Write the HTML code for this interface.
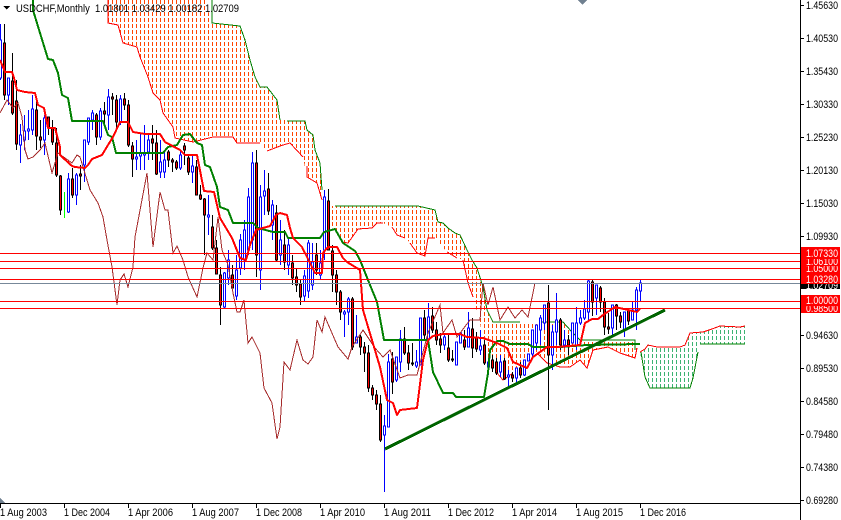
<!DOCTYPE html>
<html><head><meta charset="utf-8"><title>USDCHF Monthly</title>
<style>html,body{margin:0;padding:0;background:#fff;width:841px;height:520px;overflow:hidden}
svg{display:block}text{font-family:"Liberation Sans",sans-serif;font-size:11px;fill:#000}
.w text{fill:#fff}</style></head><body>
<svg width="841" height="520" viewBox="0 0 841 520" xmlns="http://www.w3.org/2000/svg" shape-rendering="crispEdges">
<defs>
<pattern id="o" width="4" height="6" patternUnits="userSpaceOnUse"><rect x="0" y="0" width="1" height="4" fill="#ff4500"/></pattern>
<pattern id="g" width="4" height="6" patternUnits="userSpaceOnUse"><rect x="0" y="0" width="1" height="4" fill="#3cb371"/></pattern>
</defs>
<!-- clouds -->
<path fill="url(#o)" d="M107 0H205L212 23L240 26L245 40L250 60L255 77L260 87L267 87L277 100L280 120L305 121L307 130L313 135L315 150L320 163L322 190L322 200L317 183L307 177L303 157L290 143L283 145L267 151L260 143L237 143L233 137L213 137L193 142L175 138L173 127L163 113L160 100L153 93L148 77L140 57L137 47L123 43L118 25L108 23Z"/>
<path fill="url(#o)" d="M325 206L418 206L435 210L438 222L443 223L448 228L455 233L460 235L467 250L472 260L477 268L483 287L487 310L493 322L563 322L572 332L580 340L635 340L637 350L635 358L620 353L608 347L593 350L587 368L580 360L570 367L547 363L537 353L513 373L503 380L497 373L488 363L480 323L473 297L468 283L463 260L457 258L447 252L435 238L428 238L425 256L417 253L410 243L405 238L397 235L392 227L383 223L377 223L372 228L358 229L348 243L342 242L335 230L322 213Z"/>
<path fill="url(#g)" d="M640 352L645 349L648 345L657 347L680 347L685 345L690 333L703 332L712 329L720 326L740 327L745 326V344H700L698 352L693 378L690 388H650L645 377Z"/>
<g fill="none" stroke-width="1">
<path stroke="#ff0000" d="M108 0V23L118 25L123 43L137 47L140 57L148 77L153 93L160 100L163 113L173 127L175 138L193 142L213 137L233 137L237 143L260 143M267 151L283 145L290 143L303 157M307 166V177L317 183L322 200M335 230L342 242L348 243L358 229L372 228L377 223L383 223M392 227L397 235L405 238M410 243L417 253L425 256L428 238L435 238M447 252L457 258M463 260L468 283L473 297M497 373L503 380L513 373M537 353L547 363L560 367L570 367L580 360L587 368L593 350L608 347L620 353L635 358L637 348"/>
<path stroke="#008000" d="M212 0V23L240 26L245 40L250 60L255 77L260 87L267 87L277 100L280 120M287 121H305L307 130L313 135L315 150L320 163L322 190M335 206H418L435 210L438 222L443 223L448 228L455 233L460 235L467 250L472 260L477 268L483 287L487 310L493 322H520M540 322H563L572 332L580 340H635V350"/>
<path stroke="#ff0000" d="M640 352L645 349L648 345L657 347H680L685 345L690 333L703 332L712 329L720 326L740 327L745 326"/>
<path stroke="#008000" d="M745 344H700M698 352L693 378L690 388H650L645 377L641 352"/>
</g>
<!-- candles wicks -->
<path fill="none" stroke="#0000ff" d="M0.5 24V80M8.5 78V105M20.5 124V163M24.5 115V150M28.5 110V140M32.5 95V135M44.5 115V155M68.5 173V213M76.5 173V205M84.5 140V182M88.5 118V145M92.5 110V130M100.5 108V140M108.5 89V130M120.5 95V125M136.5 140V170M140.5 133V170M144.5 125V170M148.5 133V160M160.5 140V178M164.5 152V178M180.5 150V170M192.5 155V183M208.5 195V235M224.5 272V308M228.5 250V285M236.5 255V300M240.5 234V275M244.5 220V270M248.5 188V255M252.5 152V250M260.5 185V290M264.5 170V215M272.5 200V240M280.5 220V265M288.5 238V275M304.5 270V302M308.5 240V298M312.5 243V290M320.5 250V280M324.5 190V260M344.5 310V337M348.5 297V325M356.5 315V343M384.5 415V492M388.5 354V427M396.5 357V382M400.5 330V372M416.5 350V368M420.5 318V365M428.5 303V340M444.5 335V350M456.5 342V365M460.5 333V343M468.5 312V347M480.5 330V355M488.5 358V375M500.5 355V377M508.5 370V386M516.5 368V384M524.5 360V376M528.5 354V361M532.5 330V358M536.5 325V350M540.5 315V345M544.5 305V330M552.5 325V370M556.5 293V345M564.5 330V348M572.5 323V343M576.5 307V350M580.5 310V325M584.5 300V320M588.5 279V320M596.5 285V315M612.5 305V337M624.5 312V337M632.5 302V320M636.5 287V330M640.5 280V302"/>
<path fill="none" stroke="#000" d="M4.5 24V100M12.5 53V115M16.5 80V150M36.5 100V150M40.5 120V148M48.5 117V135M52.5 120V145M56.5 128V177M60.5 175V215M72.5 168V198M80.5 165V190M96.5 113V145M104.5 102V125M112.5 93V115M116.5 95V130M124.5 93V110M128.5 100V147M132.5 142V177M152.5 125V160M156.5 130V175M168.5 150V167M172.5 158V172M176.5 160V170M184.5 143V165M188.5 155V175M196.5 160V195M200.5 185V200M204.5 198V255M212.5 215V250M216.5 240V274M220.5 267V325M232.5 265V288M256.5 150V277M268.5 173V215M276.5 205V262M284.5 230V270M292.5 255V285M296.5 268V292M300.5 280V305M316.5 243V275M328.5 189V250M332.5 245V292M336.5 270V305M340.5 290V320M352.5 297V350M360.5 335V355M364.5 342V372M368.5 345V392M372.5 385V400M376.5 390V410M380.5 395V442M392.5 352V394M404.5 327V355M408.5 345V370M412.5 343V366M424.5 310V340M432.5 307V333M436.5 322V345M440.5 333V353M448.5 335V362M452.5 350V362M464.5 330V350M472.5 318V358M476.5 332V352M484.5 340V365M492.5 355V372M496.5 358V375M504.5 358V380M512.5 372V382M520.5 362V378M548.5 285V410M560.5 318V350M568.5 335V355M592.5 280V316M600.5 286V312M604.5 298V335M608.5 313V334M616.5 304V330M620.5 312V328M628.5 308V325"/>
<path fill="none" stroke="#00ff00" d="M64.5 192V218"/>
<!-- blue bodies -->
<path fill="#fff" stroke="#0000ff" d="M-0.5 40h2v38h-2zM7.5 78h2v17h-2zM19.5 135h2v10h-2zM23.5 131h2v9h-2zM27.5 129h2v2h-2zM31.5 109h2v21h-2zM43.5 118h2v22h-2zM67.5 179h2v33h-2zM75.5 175h2v20h-2zM83.5 140h2v25h-2zM87.5 118h2v24h-2zM91.5 113h2v7h-2zM99.5 111h2v26h-2zM107.5 97h2v18h-2zM119.5 99h2v23h-2zM135.5 157h2v2h-2zM139.5 153h2v3h-2zM143.5 153h2v2h-2zM147.5 140h2v12h-2zM159.5 162h2v10h-2zM163.5 160h2v12h-2zM179.5 155h2v13h-2zM191.5 166h2v6h-2zM207.5 215h2v2h-2zM223.5 273h2v34h-2zM227.5 260h2v18h-2zM235.5 270h2v26h-2zM239.5 240h2v28h-2zM243.5 230h2v30h-2zM247.5 197h2v53h-2zM251.5 163h2v77h-2zM259.5 197h2v73h-2zM263.5 191h2v5h-2zM271.5 205h2v20h-2zM279.5 240h2v15h-2zM287.5 245h2v20h-2zM303.5 276h2v20h-2zM307.5 243h2v48h-2zM311.5 262h2v23h-2zM319.5 263h2v12h-2zM323.5 197h2v53h-2zM343.5 312h2v2h-2zM347.5 299h2v13h-2zM355.5 337h2v6h-2zM383.5 426h2v9h-2zM387.5 362h2v65h-2zM395.5 357h2v23h-2zM399.5 339h2v23h-2zM415.5 362h2v4h-2zM419.5 318h2v47h-2zM427.5 317h2v23h-2zM443.5 337h2v8h-2zM455.5 342h2v23h-2zM459.5 333h2v10h-2zM467.5 328h2v19h-2zM479.5 346h2v4h-2zM487.5 362h2v5h-2zM499.5 362h2v10h-2zM507.5 375h2v2h-2zM515.5 368h2v10h-2zM523.5 360h2v15h-2zM527.5 354h2v7h-2zM531.5 330h2v24h-2zM535.5 325h2v18h-2zM539.5 318h2v12h-2zM543.5 305h2v18h-2zM551.5 332h2v23h-2zM555.5 320h2v12h-2zM563.5 340h2v5h-2zM571.5 323h2v20h-2zM575.5 323h2v22h-2zM579.5 318h2v5h-2zM583.5 309h2v9h-2zM587.5 281h2v31h-2zM595.5 285h2v13h-2zM611.5 305h2v23h-2zM623.5 312h2v18h-2zM631.5 310h2v10h-2zM635.5 290h2v20h-2zM639.5 283h2v8h-2z"/>
<!-- red bodies -->
<path fill="#ff0000" stroke="#000" d="M3.5 43h2v52h-2zM11.5 81h2v32h-2zM15.5 101h2v43h-2zM35.5 110h2v26h-2zM39.5 137h2v3h-2zM47.5 117h2v11h-2zM51.5 128h2v14h-2zM55.5 143h2v32h-2zM59.5 176h2v34h-2zM71.5 179h2v16h-2zM79.5 174h2v2h-2zM95.5 115h2v22h-2zM103.5 111h2v3h-2zM111.5 97h2v2h-2zM115.5 100h2v22h-2zM123.5 99h2v6h-2zM127.5 105h2v40h-2zM131.5 146h2v13h-2zM151.5 139h2v4h-2zM155.5 143h2v31h-2zM167.5 152h2v8h-2zM171.5 160h2v2h-2zM175.5 162h2v6h-2zM183.5 146h2v4h-2zM187.5 158h2v14h-2zM195.5 167h2v28h-2zM199.5 195h2v4h-2zM203.5 199h2v16h-2zM211.5 227h2v21h-2zM215.5 248h2v26h-2zM219.5 275h2v30h-2zM231.5 275h2v13h-2zM255.5 163h2v92h-2zM267.5 189h2v22h-2zM275.5 213h2v47h-2zM283.5 245h2v17h-2zM291.5 263h2v15h-2zM295.5 277h2v8h-2zM299.5 284h2v13h-2zM315.5 255h2v15h-2zM327.5 201h2v49h-2zM331.5 251h2v24h-2zM335.5 275h2v17h-2zM339.5 292h2v20h-2zM351.5 299h2v48h-2zM359.5 337h2v10h-2zM363.5 347h2v6h-2zM367.5 353h2v35h-2zM371.5 388h2v7h-2zM375.5 395h2v9h-2zM379.5 404h2v36h-2zM391.5 359h2v23h-2zM403.5 339h2v14h-2zM407.5 353h2v10h-2zM411.5 363h2v1h-2zM423.5 318h2v17h-2zM431.5 316h2v14h-2zM435.5 330h2v10h-2zM439.5 339h2v6h-2zM447.5 348h2v12h-2zM451.5 359h2v1h-2zM463.5 340h2v7h-2zM471.5 329h2v19h-2zM475.5 337h2v12h-2zM483.5 345h2v18h-2zM491.5 360h2v8h-2zM495.5 362h2v11h-2zM503.5 361h2v18h-2zM511.5 375h2v3h-2zM519.5 368h2v7h-2zM547.5 303h2v52h-2zM559.5 320h2v25h-2zM567.5 340h2v5h-2zM591.5 282h2v20h-2zM599.5 288h2v14h-2zM603.5 302h2v25h-2zM607.5 327h2v2h-2zM615.5 305h2v11h-2zM619.5 316h2v6h-2zM627.5 310h2v11h-2z"/>
<!-- chikou -->
<path fill="none" stroke="#a52a2a" stroke-width="1" d="M0 113L7 100L13 108L18 103L22 117L25 150L28 159L33 157L40 150L45 143L52 173L58 153L72 163L77 155L80 157L90 190L98 203L103 217L107 240L112 267L117 305L120 280L124 274L128 287L133 267L135 237L147 173L153 247L160 192L165 210L168 210L173 253L177 246L183 260L188 277L197 297L203 268L207 253L213 260L218 217L222 250L228 265L233 293L237 312L240 312L244 300L248 343L252 337L260 353L264 388L272 403L277 439L280 427L284 362L290 370L297 340L303 360L308 364L313 357L317 320L322 332L325 317L338 347L348 359L352 347L363 330L375 348L383 357L390 350L400 378L408 375L417 375L428 333L440 305L443 333L452 320L457 337L470 320L480 320L483 283L488 305L493 287L500 320L508 307L515 318L522 310L528 317L535 283"/>
<!-- kijun green -->
<path fill="none" stroke="#008000" stroke-width="2" stroke-linejoin="round" d="M33 0V10L40 33L48 59L53 60L58 73L62 95L68 98L72 121H103L108 135L112 137L116 153H163L168 147L177 145L183 135L190 134L197 143L202 145L205 165L210 167L217 187L220 207L228 210L233 223H253L258 228L273 232H285L288 238H320L324 232L335 229L343 243L355 251L360 260L370 285L377 302L384 340H428L433 372L443 393H453L456 397H484L488 373L490 350L497 341H503L510 344H528L533 347H560L587 345L640 344"/>
<!-- tenkan red -->
<path fill="none" stroke="#ff0000" stroke-width="2" stroke-linejoin="round" d="M0 60L5 72H12L14 78L17 90L25 92L35 93L38 105L44 108L48 128H55L60 147V155L72 166L75 167L85 168L88 165L92 159L102 155L108 145L113 137L120 122H128L133 132L145 134H160L165 142L180 150L185 155H197L204 191L214 192L220 218L232 238L240 258L246 260L250 245L256 230L270 226L276 215L280 213L287 215L290 228L293 238L302 247L310 263L315 273H322L323 253L328 247H337L343 258L347 262L360 270L363 310L380 367L387 400L393 403L397 415L400 410L417 408L423 360L428 340L433 336L443 334H460L467 337L483 338L497 343L507 348L513 362L527 368L533 357L547 347H557L580 345L585 323L592 319H598L603 315L615 307L637 312L640 309"/>
<!-- trendline -->
<path fill="none" stroke="#006400" stroke-width="3" d="M385 449L665 310"/>
<!-- horizontal lines -->
<path fill="none" stroke="#ff0000" d="M0 253.5H800M0 261.5H800M0 268.5H800M0 279.5H800M0 301.5H800M0 308.5H800"/>
<path fill="none" stroke="#778899" d="M0 283.5H800"/>
<!-- marker triangles -->
<path fill="#708090" d="M578 0H587L582.500 5ZM0 498L5 503H0Z"/>
<!-- title -->
<path fill="#000" d="M3 6H10L6.500 9.500Z"/>
<text x="16" y="12" textLength="223" lengthAdjust="spacingAndGlyphs" xml:space="preserve">USDCHF,Monthly  1.01801 1.03429 1.00182 1.02709</text>
<!-- axes -->
<rect x="800" y="0" width="1" height="520" fill="#000"/>
<rect x="0" y="503" width="801" height="1" fill="#000"/>
<path fill="none" stroke="#000" d="M800 5.500H804M800 38.500H804M800 71.500H804M800 104.500H804M800 137.500H804M800 170.500H804M800 203.500H804M800 236.500H804M800 335.500H804M800 368.500H804M800 401.500H804M800 434.500H804M800 467.500H804M800 500.500H804M0.500 503V508M64.500 503V508M128.500 503V508M192.500 503V508M256.500 503V508M320.500 503V508M384.500 503V508M448.500 503V508M512.500 503V508M576.500 503V508M640.500 503V508"/>
<g>
<text x="806" y="9" textLength="32" lengthAdjust="spacingAndGlyphs">1.45630</text>
<text x="806" y="42" textLength="32" lengthAdjust="spacingAndGlyphs">1.40530</text>
<text x="806" y="75" textLength="32" lengthAdjust="spacingAndGlyphs">1.35430</text>
<text x="806" y="108" textLength="32" lengthAdjust="spacingAndGlyphs">1.30330</text>
<text x="806" y="141" textLength="32" lengthAdjust="spacingAndGlyphs">1.25230</text>
<text x="806" y="174" textLength="32" lengthAdjust="spacingAndGlyphs">1.20130</text>
<text x="806" y="207" textLength="32" lengthAdjust="spacingAndGlyphs">1.15030</text>
<text x="806" y="240" textLength="32" lengthAdjust="spacingAndGlyphs">1.09930</text>
<text x="806" y="339" textLength="32" lengthAdjust="spacingAndGlyphs">0.94630</text>
<text x="806" y="372" textLength="32" lengthAdjust="spacingAndGlyphs">0.89530</text>
<text x="806" y="405" textLength="32" lengthAdjust="spacingAndGlyphs">0.84580</text>
<text x="806" y="438" textLength="32" lengthAdjust="spacingAndGlyphs">0.79480</text>
<text x="806" y="471" textLength="32" lengthAdjust="spacingAndGlyphs">0.74380</text>
<text x="806" y="504" textLength="32" lengthAdjust="spacingAndGlyphs">0.69280</text>
</g>
<!-- price tags -->
<g class="w">
<rect x="801" y="279" width="39" height="10" fill="#000"/>
<text x="806" y="289" textLength="32" lengthAdjust="spacingAndGlyphs">1.02709</text>
<rect x="801" y="263" width="39" height="11" fill="#ff0000"/>
<text x="806" y="272" textLength="32" lengthAdjust="spacingAndGlyphs">1.05000</text>
<rect x="801" y="256" width="39" height="10" fill="#ff0000"/>
<text x="806" y="265" textLength="32" lengthAdjust="spacingAndGlyphs">1.06100</text>
<rect x="801" y="247" width="39" height="12" fill="#ff0000"/>
<text x="806" y="257" textLength="32" lengthAdjust="spacingAndGlyphs">1.07330</text>
<rect x="801" y="273" width="39" height="11" fill="#ff0000"/>
<text x="806" y="283" textLength="32" lengthAdjust="spacingAndGlyphs">1.03280</text>
<rect x="801" y="303" width="39" height="10" fill="#ff0000"/>
<text x="806" y="312" textLength="32" lengthAdjust="spacingAndGlyphs">0.98500</text>
<rect x="801" y="295" width="39" height="11" fill="#ff0000"/>
<text x="806" y="304" textLength="32" lengthAdjust="spacingAndGlyphs">1.00000</text>
</g>
<!-- dates -->
<g>
<text x="0" y="516" textLength="47" lengthAdjust="spacingAndGlyphs">1 Aug 2003</text>
<text x="64" y="516" textLength="46" lengthAdjust="spacingAndGlyphs">1 Dec 2004</text>
<text x="128" y="516" textLength="45" lengthAdjust="spacingAndGlyphs">1 Apr 2006</text>
<text x="192" y="516" textLength="47" lengthAdjust="spacingAndGlyphs">1 Aug 2007</text>
<text x="256" y="516" textLength="46" lengthAdjust="spacingAndGlyphs">1 Dec 2008</text>
<text x="320" y="516" textLength="45" lengthAdjust="spacingAndGlyphs">1 Apr 2010</text>
<text x="384" y="516" textLength="47" lengthAdjust="spacingAndGlyphs">1 Aug 2011</text>
<text x="448" y="516" textLength="46" lengthAdjust="spacingAndGlyphs">1 Dec 2012</text>
<text x="512" y="516" textLength="45" lengthAdjust="spacingAndGlyphs">1 Apr 2014</text>
<text x="576" y="516" textLength="47" lengthAdjust="spacingAndGlyphs">1 Aug 2015</text>
<text x="640" y="516" textLength="46" lengthAdjust="spacingAndGlyphs">1 Dec 2016</text>
</g>
</svg>
</body></html>
